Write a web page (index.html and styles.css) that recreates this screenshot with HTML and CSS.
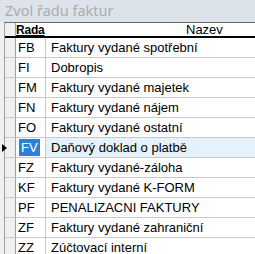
FILE: index.html
```html
<!DOCTYPE html>
<html lang="cs">
<head>
  <meta charset="UTF-8" />
  <title>Zvol řadu faktur</title>
  <link rel="stylesheet" href="styles.css">
</head>
<body>
  <div class="window">
    <div class="titlebar">Zvol řadu faktur</div>
    <div class="grid">
      <div class="row head">
        <div class="sel"></div>
        <div class="code">Rada</div>
        <div class="name">Nazev</div>
      </div>
      <div class="row"><div class="sel"></div><div class="code">FB</div><div class="name">Faktury vydané spotřební</div></div>
      <div class="row"><div class="sel"></div><div class="code">FI</div><div class="name">Dobropis</div></div>
      <div class="row"><div class="sel"></div><div class="code">FM</div><div class="name">Faktury vydané majetek</div></div>
      <div class="row"><div class="sel"></div><div class="code">FN</div><div class="name">Faktury vydané nájem</div></div>
      <div class="row"><div class="sel"></div><div class="code">FO</div><div class="name">Faktury vydané ostatní</div></div>
      <div class="row current"><div class="sel"><span class="arrow"></span></div><div class="code"><span class="hl">FV</span></div><div class="name">Daňový doklad o platbě</div></div>
      <div class="row"><div class="sel"></div><div class="code">FZ</div><div class="name">Faktury vydané-záloha</div></div>
      <div class="row"><div class="sel"></div><div class="code">KF</div><div class="name">Faktury vydané K-FORM</div></div>
      <div class="row"><div class="sel"></div><div class="code">PF</div><div class="name">PENALIZACNI FAKTURY</div></div>
      <div class="row"><div class="sel"></div><div class="code">ZF</div><div class="name">Faktury vydané zahraniční</div></div>
      <div class="row"><div class="sel"></div><div class="code">ZZ</div><div class="name">Zúčtovací interní</div></div>
    </div>
  </div>
</body>
</html>
```

FILE: styles.css
```css
body {
  margin: 0;
  background: #ffffff;
  overflow: hidden;
}
.window {
  width: 255px;
  height: 254px;
  overflow: hidden;
  background: #f0f0f0;
}
.titlebar {
  height: 22px;
  padding-left: 5px;
  background: #dde3ea;
  color: #adadad;
  font-family: "Noto Sans", sans-serif;
  font-size: 14.5px;
  line-height: 21px;
}
.grid {
  margin-left: 4px;
  border-top: 1px solid #696969;
  border-left: 1px solid #a0a0a0;
  background: #ffffff;
  font-family: "Liberation Sans", Arial, sans-serif;
  font-size: 13px;
  color: #000000;
}
.row {
  display: flex;
  height: 19px;
  border-bottom: 1px solid #c8c8c8;
}
.row.head {
  height: 13px;
  border-bottom: 2px solid #000000;
}
.sel {
  width: 10px;
  flex: none;
  background: #f0f0f0;
  border-right: 1px solid #a0a0a0;
  position: relative;
}
.code {
  width: 27px;
  flex: none;
  padding-left: 2px;
  border-right: 1px solid #c8c8c8;
  line-height: 19px;
}
.name {
  flex: 1;
  padding-left: 5px;
  white-space: nowrap;
  line-height: 19px;
}
.head .code {
  width: 29px;
  padding-left: 0;
  font-size: 12px;
  font-weight: bold;
  letter-spacing: -0.2px;
  text-decoration: underline;
  line-height: 14px;
  border-right: none;
  white-space: nowrap;
}
.head .name {
  padding-left: 141px;
  line-height: 14px;
}
.current .name {
  background: #e5f1fb;
}
.hl {
  display: inline-block;
  height: 17px;
  margin-top: 1px;
  padding: 0 2px;
  line-height: 17px;
  background: #2f7fd4;
  color: #ffffff;
  border-left: 1px solid #ffffff;
  border-right: 1px solid #ffffff;
}
.arrow {
  position: absolute;
  left: -3px;
  top: 6px;
  border-left: 5px solid #000000;
  border-top: 4px solid transparent;
  border-bottom: 4px solid transparent;
}
```
